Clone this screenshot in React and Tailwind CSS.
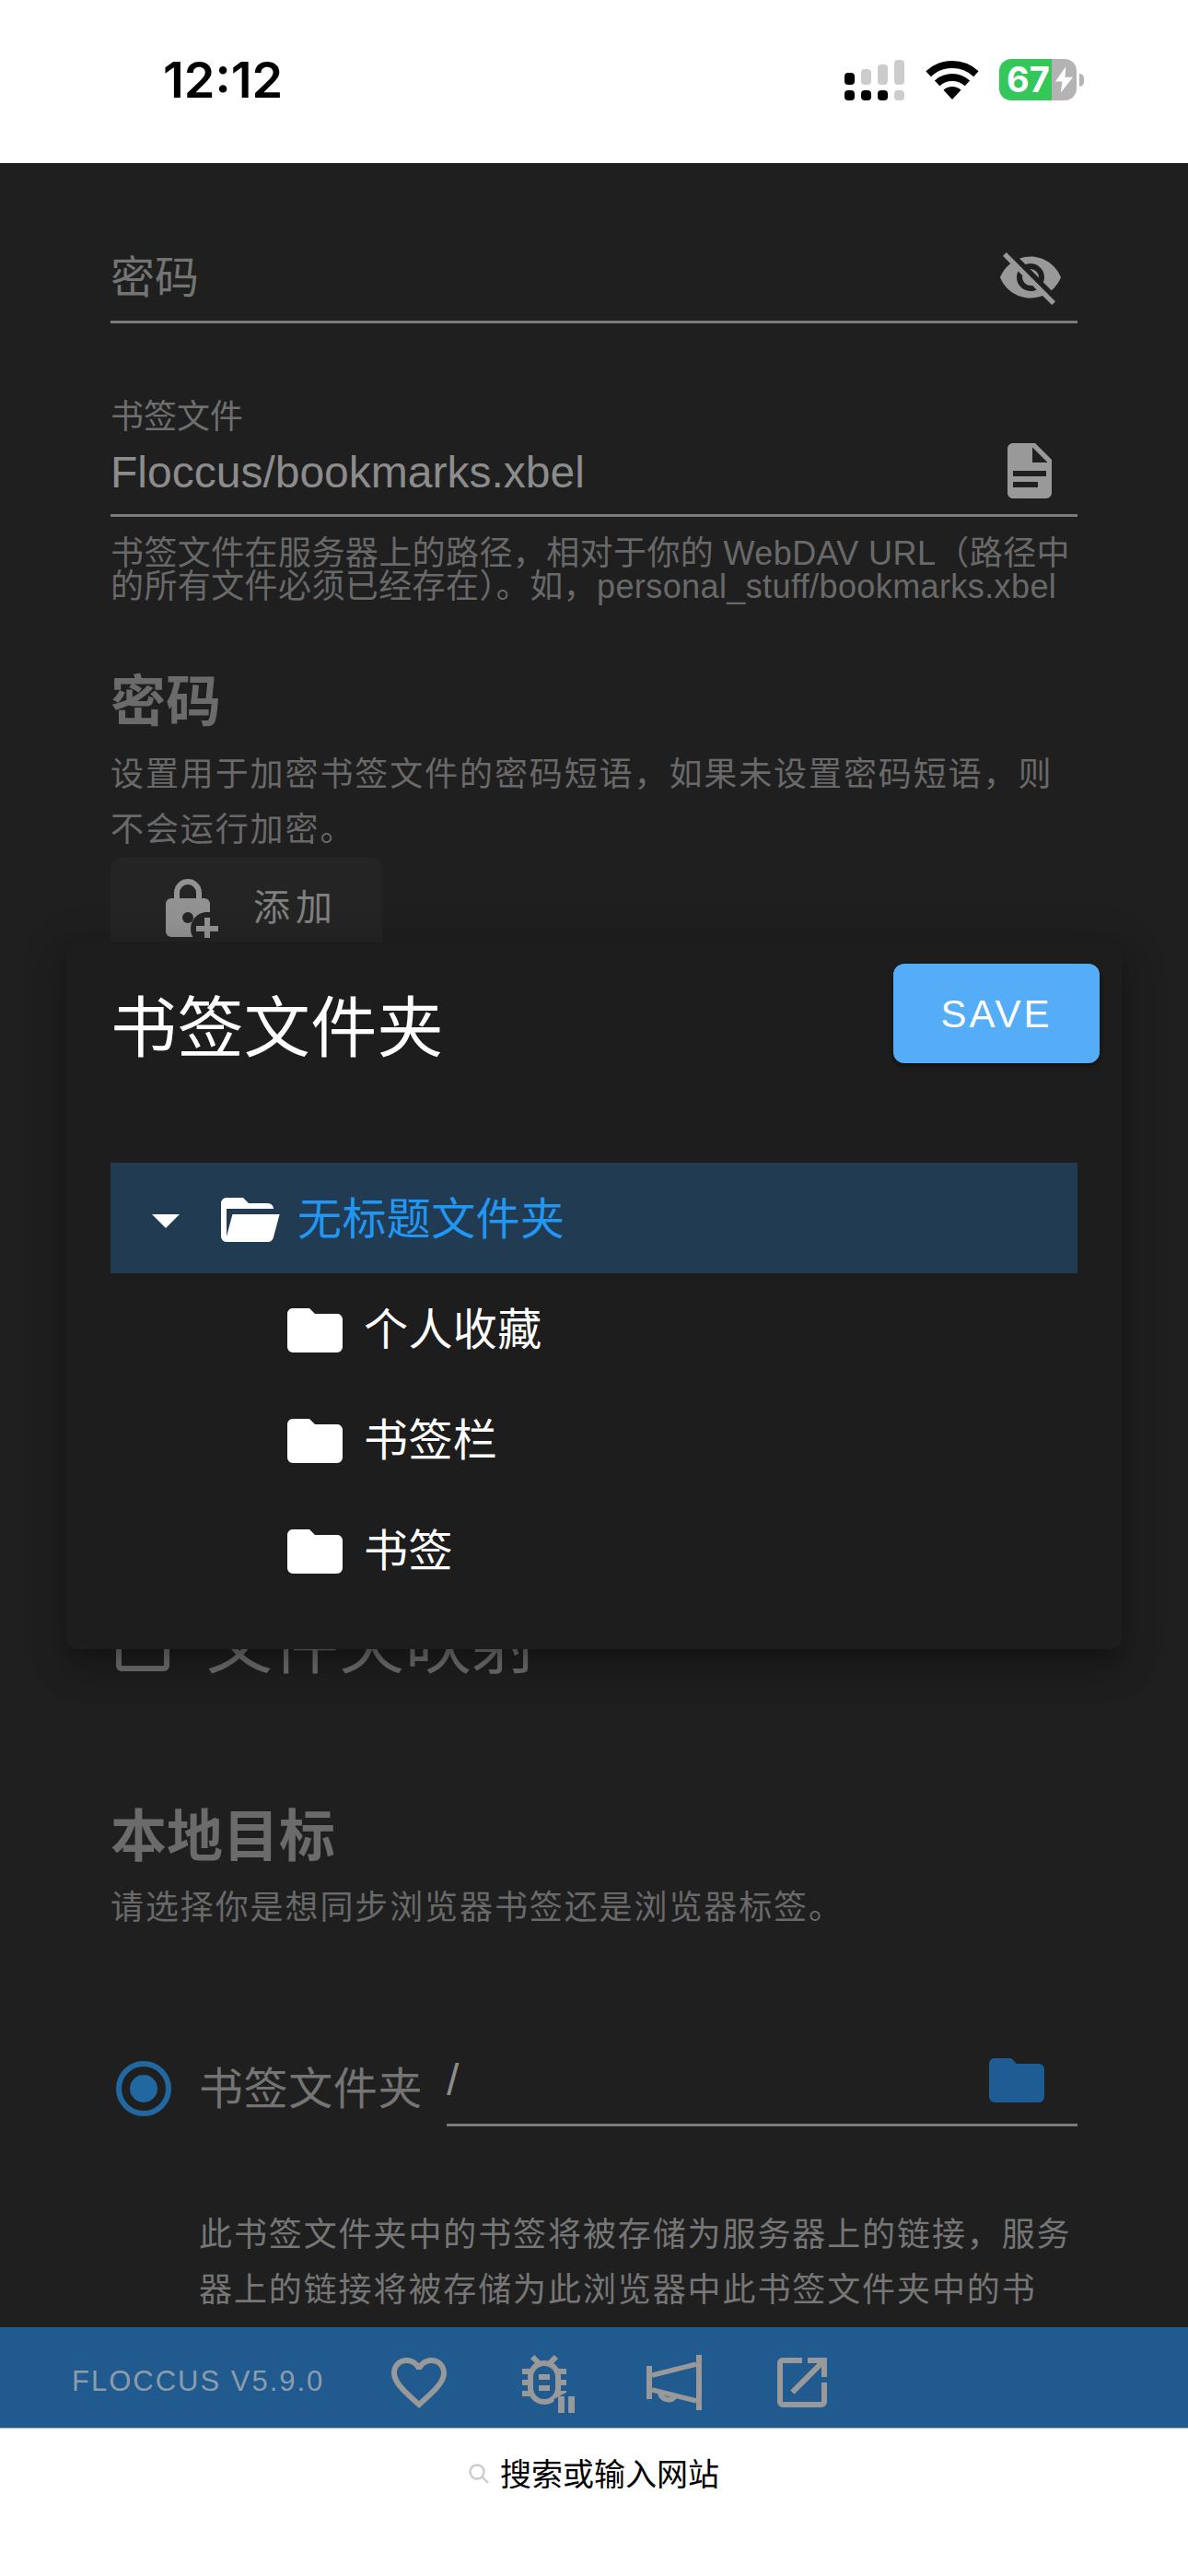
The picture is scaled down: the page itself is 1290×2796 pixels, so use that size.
import React from "react";

const paths = {
  eyeOff:
    "M11.83,9L15,12.16C15,12.11 15,12.05 15,12A3,3 0 0,0 12,9C11.94,9 11.89,9 11.83,9M7.53,9.8L9.08,11.35C9.03,11.56 9,11.77 9,12A3,3 0 0,0 12,15C12.22,15 12.44,14.97 12.65,14.92L14.2,16.47C13.53,16.8 12.79,17 12,17A5,5 0 0,1 7,12C7,11.21 7.2,10.47 7.53,9.8M2,4.27L4.28,6.55L4.73,7C3.08,8.3 1.78,10 1,12C2.73,16.39 7,19.5 12,19.5C13.55,19.5 15.03,19.2 16.38,18.66L16.81,19.08L19.73,22L21,20.73L3.27,3M12,7A5,5 0 0,1 17,12C17,12.64 16.87,13.26 16.64,13.82L19.57,16.75C21.07,15.5 22.27,13.86 23,12C21.27,7.61 17,4.5 12,4.5C10.6,4.5 9.26,4.75 8,5.2L10.17,7.35C10.74,7.13 11.35,7 12,7Z",
  file: "M13,9H18.5L13,3.5V9M6,2H14L20,8V20A2,2 0 0,1 18,22H6C4.89,22 4,21.1 4,20V4C4,2.89 4.89,2 6,2M15,18V16H6V18H15M18,14V12H6V14H18Z",
  folder: "M10,4H4C2.89,4 2,4.89 2,6V18A2,2 0 0,0 4,20H20A2,2 0 0,0 22,18V8C22,6.89 21.1,6 20,6H12L10,4Z",
  folderOpen:
    "M19,20H4C2.89,20 2,19.1 2,18V6C2,4.89 2.89,4 4,4H10L12,6H19A2,2 0 0,1 21,8H21L4,8V18L6.14,10H23.21L20.93,18.5C20.7,19.37 19.92,20 19,20Z",
  caret: "M7,10L12,15L17,10H7Z",
  heart:
    "M12.1,18.55L12,18.65L11.89,18.55C7.14,14.24 4,11.39 4,8.5C4,6.5 5.5,5 7.5,5C9.04,5 10.54,6 11.07,7.36H12.93C13.46,6 14.96,5 16.5,5C18.5,5 20,6.5 20,8.5C20,11.39 16.86,14.24 12.1,18.55M16.5,3C14.76,3 13.09,3.81 12,5.08C10.91,3.81 9.24,3 7.5,3C4.42,3 2,5.41 2,8.5C2,12.27 5.4,15.36 10.55,20.03L12,21.35L13.45,20.03C18.6,15.36 22,12.27 22,8.5C22,5.41 19.58,3 16.5,3Z",
  bug: "M14,12H10V10H14M14,16H10V14H14M20,8H17.19C16.74,7.22 16.12,6.55 15.37,6.04L17,4.41L15.59,3L13.42,5.17C12.96,5.06 12.5,5 12,5C11.5,5 11.04,5.06 10.59,5.17L8.41,3L7,4.41L8.62,6.04C7.88,6.55 7.26,7.22 6.81,8H4V10H6.09C6.04,10.33 6,10.66 6,11V12H4V14H6V15C6,15.34 6.04,15.67 6.09,16H4V18H6.81C7.85,19.79 9.78,21 12,21C14.22,21 16.15,19.79 17.19,18H20V16H17.91C17.96,15.67 18,15.34 18,15V14H20V12H18V11C18,10.66 17.96,10.33 17.91,10H20V8M16,15A4,4 0 0,1 12,19A4,4 0 0,1 8,15V11A4,4 0 0,1 12,7A4,4 0 0,1 16,11V15Z",
  openNew:
    "M14,3V5H17.59L7.76,14.83L9.17,16.24L19,6.41V10H21V3M19,19H5V5H12V3H5C3.89,3 3,3.9 3,5V19A2,2 0 0,0 5,21H19A2,2 0 0,0 21,19V12H19V19Z",
};

function Icon({ d, className }) {
  return (
    <svg viewBox="0 0 24 24" className={`w-[72px] h-[72px] shrink-0 fill-current ${className || ""}`}>
      <path d={d} />
    </svg>
  );
}

function BugPauseIcon() {
  return (
    <svg viewBox="0 0 24 24" className="w-[72px] h-[72px] shrink-0 fill-current text-[#999999]">
      <g transform="translate(0,-1)">
        <path d={paths.bug} />
      </g>
      <polygon points="15.5,18 24,13.5 24,24 15.5,24" fill="#205a8e" />
      <rect x="17" y="17" width="2.3" height="6" />
      <rect x="20.7" y="17" width="2.3" height="6" />
    </svg>
  );
}

function BullhornIcon() {
  return (
    <svg viewBox="0 0 24 24" className="w-[72px] h-[72px] shrink-0 text-[#999999]">
      <rect x="3" y="6" width="2" height="12" fill="currentColor" />
      <rect x="21" y="2" width="2" height="20" fill="currentColor" />
      <path d="M5 9.4L21 5.4M5 14.6L21 18.6" stroke="currentColor" strokeWidth="1.8" fill="none" />
      <path d="M7.9 15.5a3 3 0 0 0 5.5 1.3" stroke="currentColor" strokeWidth="1.9" fill="none" />
    </svg>
  );
}

function LockPlusIcon() {
  return (
    <svg viewBox="0 0 60 66" className="w-[60px] h-[66px] shrink-0">
      <path d="M14 24V17a12 12 0 0 1 24 0v7" stroke="#929292" strokeWidth="6" fill="none" />
      <rect x="2" y="23" width="48" height="42" rx="6" fill="#929292" />
      <circle cx="26" cy="44" r="6" fill="#242424" />
      <circle cx="47" cy="56" r="18" fill="#242424" />
      <rect x="35" y="53" width="24" height="6" fill="#929292" />
      <rect x="44" y="44" width="6" height="22" fill="#929292" />
    </svg>
  );
}

function SignalIcon() {
  const top = [
    { x: 0, y: 14, h: 13, c: "#000000" },
    { x: 18, y: 10, h: 17, c: "#cccccc" },
    { x: 36, y: 5, h: 22, c: "#cccccc" },
    { x: 54, y: 0, h: 27, c: "#cccccc" },
  ];
  const bottom = ["#000000", "#000000", "#000000", "#cccccc"];
  return (
    <svg viewBox="0 0 65 44" className="w-[65px] h-[44px]">
      {top.map((b) => (
        <rect key={b.x} x={b.x} y={b.y} width="11" height={b.h} rx="4" fill={b.c} />
      ))}
      {bottom.map((c, i) => (
        <rect key={i} x={i * 18} y="33" width="11" height="11" rx="4" fill={c} />
      ))}
    </svg>
  );
}

function WifiIcon() {
  return (
    <svg viewBox="0 0 58 42" className="w-[58px] h-[42px]">
      <path d="M3.1 14.2A38 38 0 0 1 54.9 14.2" stroke="#000" strokeWidth="8" fill="none" />
      <path d="M12.6 24.4A24 24 0 0 1 45.4 24.4" stroke="#000" strokeWidth="8" fill="none" />
      <path d="M29 42L19.5 31.8A14 14 0 0 1 38.5 31.8Z" fill="#000" />
    </svg>
  );
}

function Battery() {
  return (
    <div className="flex items-center">
      <div className="relative flex w-[84px] h-[45px] rounded-[13px] overflow-hidden">
        <div className="w-[57px] bg-[#34c759] text-white text-[38px] leading-[45px] font-bold font-['Inter',sans-serif] pl-[8px]">
          67
        </div>
        <div className="flex-1 bg-[#b3b3b3] flex items-center justify-center">
          <svg viewBox="0 0 22 30" className="w-[21px] h-[29px]">
            <path d="M13 0L1 17h8L7 30 21 12h-9z" fill="#fff" />
          </svg>
        </div>
      </div>
      <div className="w-[5px] h-[14px] ml-[3px] rounded-r-[5px] bg-[#b3b3b3]" />
    </div>
  );
}

function TreeChild({ label }) {
  return (
    <div className="flex items-center h-[120px] pt-[4px] pl-[186px] text-white">
      <Icon d={paths.folder} />
      <span className="ml-[17px] text-[48px] leading-[72px] tracking-[0.4px]">{label}</span>
    </div>
  );
}

function FooterIcon({ d, className }) {
  return <Icon d={d} className={`text-[#999999] ${className || ""}`} />;
}

export default function App() {
  return (
    <div className="w-[1290px] h-[2796px] flex flex-col bg-white overflow-hidden font-['Liberation_Sans','Noto_Sans_CJK_SC',sans-serif]">
      {/* status bar */}
      <div className="h-[177px] shrink-0 flex items-start pl-[177px] pr-[113px] pt-[64px]">
        <div className="text-[54px] leading-[46px] font-semibold font-['Inter',sans-serif] text-black">12:12</div>
        <div className="ml-auto flex items-center">
          <SignalIcon />
          <div className="ml-[23px]">
            <WifiIcon />
          </div>
          <div className="ml-[22px]">
            <Battery />
          </div>
        </div>
      </div>

      {/* settings page, dimmed behind the dialog */}
      <div className="relative h-[2349px] shrink-0 overflow-hidden bg-[#1f1f1f]">
        <div className="px-[120px]">
          <div className="mt-[88px] h-[86px] flex items-start justify-between border-b-[3px] border-[#7b7b7b]">
            <span className="text-[48px] leading-[74px] text-[#747474]">密码</span>
            <Icon d={paths.eyeOff} className="text-[#999999] mr-[15px]" />
          </div>

          <div className="mt-[84px] text-[36px] leading-[36px] text-[#6e6e6e]">书签文件</div>
          <div className="mt-[4px] h-[86px] flex items-start justify-between border-b-[3px] border-[#7b7b7b]">
            <span className="text-[48px] leading-[76px] text-[#8c8c8c]">Floccus/bookmarks.xbel</span>
            <Icon d={paths.file} className="text-[#999999] mr-[16px]" />
          </div>
          <p className="mt-[22px] text-[36px] leading-[36px] tracking-[0.4px] text-[#696969]">
            书签文件在服务器上的路径，相对于你的 WebDAV URL（路径中的所有文件必须已经存在）。如，personal_stuff/bookmarks.xbel
          </p>

          <h2 className="mt-[72px] text-[60px] leading-[72px] font-bold text-[#6b6b6b]">密码</h2>
          <p className="mt-[12px] text-[36px] leading-[60px] tracking-[1.9px] text-[#696969]">
            设置用于加密书签文件的密码短语，如果未设置密码短语，则不会运行加密。
          </p>
          <button className="flex items-center w-[295px] h-[108px] pl-[58px] rounded-[12px] bg-[#242424]">
            <LockPlusIcon />
            <span className="ml-[37px] text-[40px] tracking-[6px] text-[#808080]">添加</span>
          </button>

          <div className="mt-[710px] flex items-center h-[72px]">
            <div className="w-[58px] h-[58px] ml-[6px] rounded-[6px] border-[6px] border-[#6e6e6e]" />
            <span className="ml-[40px] text-[72px] leading-[72px] text-[#6e6e6e]">文件夹映射</span>
          </div>

          <h2 className="mt-[137px] text-[61px] leading-[72px] font-bold text-[#6b6b6b]">本地目标</h2>
          <p className="mt-[11px] text-[36px] leading-[60px] tracking-[1.9px] text-[#696969]">
            请选择你是想同步浏览器书签还是浏览器标签。
          </p>

          <div className="mt-[121px] flex items-start">
            <div className="mt-[15px] ml-[6px] w-[60px] h-[60px] rounded-full border-[6px] border-[#20689f] flex items-center justify-center">
              <div className="w-[30px] h-[30px] rounded-full bg-[#20689f]" />
            </div>
            <span className="ml-[30px] mt-[10px] text-[48px] leading-[72px] tracking-[0.6px] text-[#747474]">书签文件夹</span>
            <div className="ml-auto w-[685px] h-[86px] flex items-start justify-between border-b-[3px] border-[#7b7b7b]">
              <span className="text-[48px] leading-[72px] text-[#8c8c8c]">/</span>
              <Icon d={paths.folder} className="text-[#1f5c94] mr-[30px]" />
            </div>
          </div>

          <p className="mt-[88px] pl-[96px] text-[36px] leading-[60px] tracking-[1.9px] text-[#767676]">
            此书签文件夹中的书签将被存储为服务器上的链接，服务器上的链接将被存储为此浏览器中此书签文件夹中的书
          </p>
        </div>

        {/* folder picker dialog */}
        <div className="absolute left-[72px] top-[845px] w-[1146px] h-[768px] rounded-[12px] bg-[#1d1d1d] shadow-[0_11px_15px_-7px_rgba(0,0,0,0.2),0_24px_38px_3px_rgba(0,0,0,0.14),0_9px_46px_8px_rgba(0,0,0,0.12)]">
          <div className="flex items-start justify-between pl-[48px] pr-[24px] pt-[24px]">
            <h1 className="mt-[26px] text-[72px] leading-[88px] tracking-[0.4px] text-white">书签文件夹</h1>
            <button className="w-[224px] h-[108px] rounded-[12px] bg-[#55adf7] text-white text-[42px] tracking-[3px] shadow-[0_3px_6px_rgba(0,0,0,0.45)]">
              SAVE
            </button>
          </div>
          <div className="mx-[48px] mt-[102px]">
            <div className="flex items-center h-[120px] pt-[4px] pl-[24px] bg-[#203b52]">
              <Icon d={paths.caret} className="text-white" />
              <Icon d={paths.folderOpen} className="text-white ml-[18px]" />
              <span className="ml-[17px] text-[48px] leading-[72px] tracking-[0.4px] text-[#2196f3]">无标题文件夹</span>
            </div>
            <TreeChild label="个人收藏" />
            <TreeChild label="书签栏" />
            <TreeChild label="书签" />
          </div>
        </div>
      </div>

      {/* floccus footer */}
      <div className="h-[109px] shrink-0 flex items-center pt-[10px] pl-[78px] bg-[#205a8e]">
        <span className="w-[341px] shrink-0 text-[31px] tracking-[2px] text-[#8c9cab]">FLOCCUS V5.9.0</span>
        <FooterIcon d={paths.heart} />
        <div className="ml-[64px]">
          <BugPauseIcon />
        </div>
        <div className="ml-[66px]">
          <BullhornIcon />
        </div>
        <FooterIcon d={paths.openNew} className="ml-[70px]" />
      </div>

      {/* browser address bar */}
      <div className="flex-1 flex items-start justify-center pt-[30px] border-t border-[#b3b3b3] bg-white">
        <svg viewBox="0 0 22 22" className="w-[22px] h-[22px] mt-[8px] fill-none stroke-[#cccccc]" strokeWidth="2.4">
          <circle cx="9" cy="9" r="7.5" />
          <path d="M14.5 14.5L21 21" />
        </svg>
        <span className="ml-[12px] text-[34px] leading-[40px] text-black">搜索或输入网站</span>
      </div>
    </div>
  );
}
